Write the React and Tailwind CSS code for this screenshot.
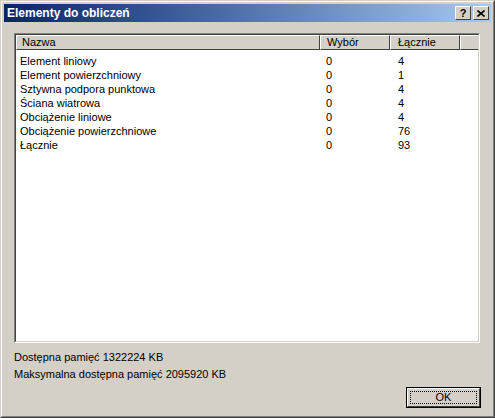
import React from 'react'

const ROWS = [
    ['Element liniowy', '0', '4'],
    ['Element powierzchniowy', '0', '1'],
    ['Sztywna podpora punktowa', '0', '4'],
    ['Ściana wiatrowa', '0', '4'],
    ['Obciążenie liniowe', '0', '4'],
    ['Obciążenie powierzchniowe', '0', '76'],
    ['Łącznie', '0', '93'],
];

function HeaderCell({ width, pad, children }) {
    return (
        <div
            className="h-full shrink-0 border-t border-l border-white border-r border-b border-r-[#404040] border-b-[#404040] bg-[#d4d0c8] leading-[13px]"
            style={{ width, paddingLeft: pad }}
        >
            {children}
        </div>
    );
}

export default function App() {
    return (
        <div className="w-[495px] h-[418px] bg-[#d4d0c8] border border-t-[#d4d0c8] border-l-[#d4d0c8] border-r-[#404040] border-b-[#404040] text-[11px] text-black" style={{ fontFamily: '"Liberation Sans", Arial, sans-serif' }}>
            <div className="w-full h-full border border-t-white border-l-white border-r-[#808080] border-b-[#808080] p-[2px] flex flex-col">
                {/* Title bar */}
                <div className="h-[18px] flex items-center justify-between bg-gradient-to-r from-[#0a246a] to-[#a6caf0] pl-[3px] pr-[2px]">
                    <span className="text-white font-bold text-[12px] leading-none">Elementy do obliczeń</span>
                    <div className="flex gap-[2px]">
                        <div className="w-[16px] h-[14px] bg-[#d4d0c8] border border-t-white border-l-white border-r-[#404040] border-b-[#404040] flex items-center justify-center font-bold text-[11px] leading-none">?</div>
                        <div className="w-[16px] h-[14px] bg-[#d4d0c8] border border-t-white border-l-white border-r-[#404040] border-b-[#404040] flex items-center justify-center">
                            <svg width="8" height="7" viewBox="0 0 8 7"><path d="M0.5 0.5 L7.5 6.5 M7.5 0.5 L0.5 6.5" stroke="#000" strokeWidth="1.6" /></svg>
                        </div>
                    </div>
                </div>

                {/* List */}
                <div className="mt-[11px] ml-[10px] w-[466px] h-[310px] border border-t-[#808080] border-l-[#808080] border-r-white border-b-white">
                    <div className="w-full h-full border border-t-[#404040] border-l-[#404040] border-r-[#d4d0c8] border-b-[#d4d0c8] bg-white flex flex-col">
                        <div className="h-[15px] flex bg-[#d4d0c8]">
                            <HeaderCell width={304} pad={5}>Nazwa</HeaderCell>
                            <HeaderCell width={70} pad={6}>Wybór</HeaderCell>
                            <HeaderCell width={70} pad={7}>Łącznie</HeaderCell>
                            <div className="flex-1 h-full border-t border-l border-white border-b border-b-[#404040]" />
                        </div>
                        <div className="pt-[4px]">
                            {ROWS.map((row) => (
                                <div key={row[0]} className="h-[14px] flex leading-[14px]">
                                    <div className="w-[304px] pl-[4px]">{row[0]}</div>
                                    <div className="w-[70px] pl-[6px]">{row[1]}</div>
                                    <div className="w-[70px] pl-[8px]">{row[2]}</div>
                                </div>
                            ))}
                        </div>
                    </div>
                </div>

                {/* Memory info */}
                <div className="ml-[10px] mt-[6px] leading-[17px]">
                    <div>Dostępna pamięć 1322224 KB</div>
                    <div>Maksymalna dostępna pamięć 2095920 KB</div>
                </div>

                {/* OK button */}
                <div className="flex justify-end pr-[10px] mt-[4px]">
                    <div className="w-[75px] h-[21px] border border-black">
                        <div className="w-full h-full border border-t-white border-l-white border-r-[#404040] border-b-[#404040] p-[2px]">
                            <div className="w-full h-full border border-dotted border-black flex items-center justify-center leading-none">OK</div>
                        </div>
                    </div>
                </div>
            </div>
        </div>
    );
}
